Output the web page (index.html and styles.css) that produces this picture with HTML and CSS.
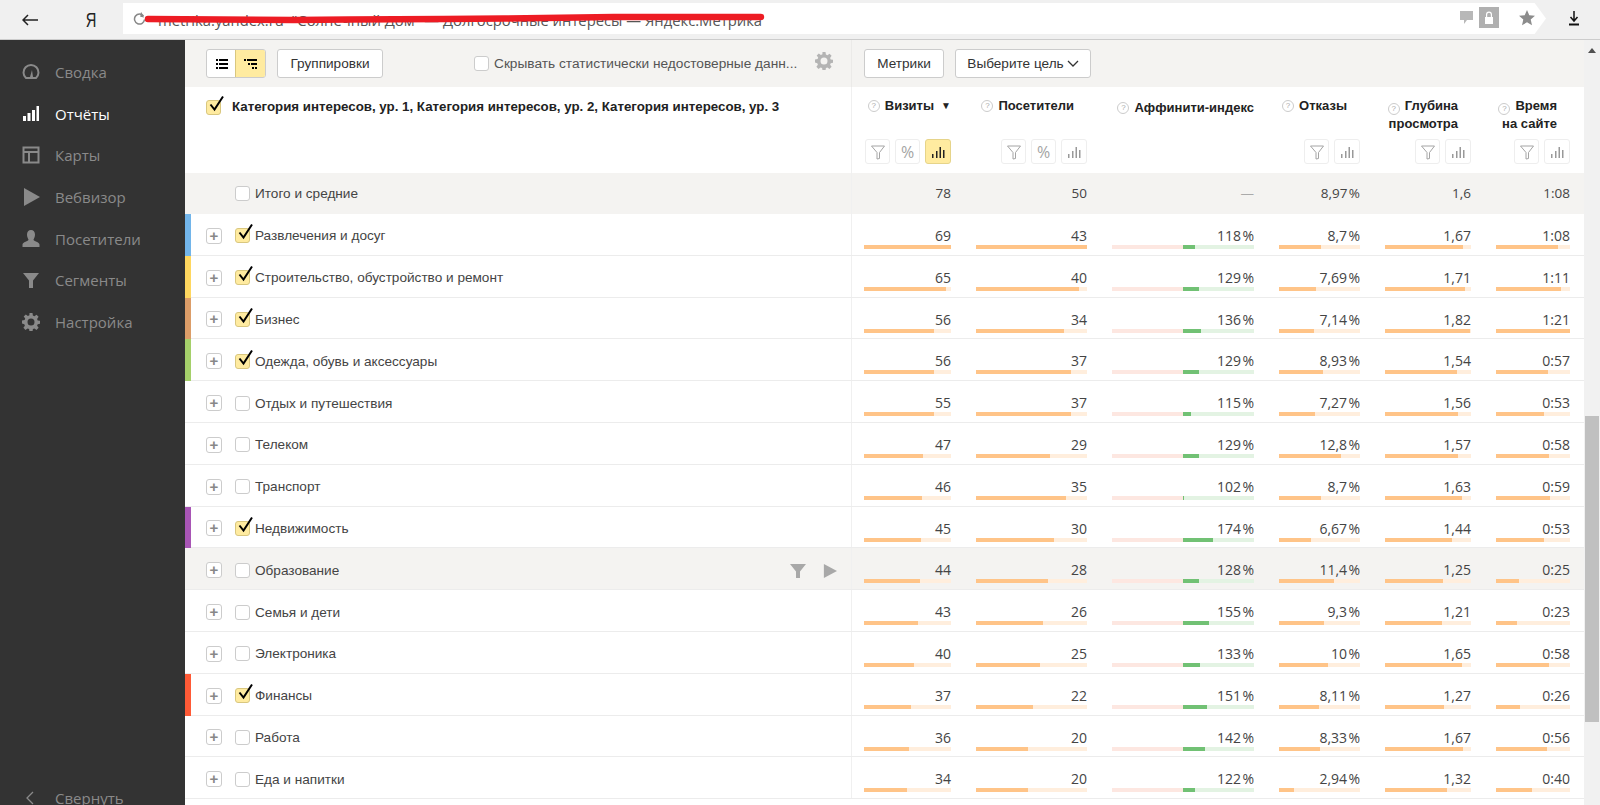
FILE: index.html
```html
<!DOCTYPE html>
<html lang="ru">
<head>
    <meta charset="UTF-8">
    <title>Долгосрочные интересы — Яндекс.Метрика</title>
    <link rel="stylesheet" href="styles.css">
</head>
<body>
    <svg class="sprite" width="0" height="0">
        <symbol id="i-funnel" viewBox="0 0 16 16"><path d="M0 1h16L10 8.500V15H6V8.500z"/></symbol>
        <symbol id="i-funnel-line" viewBox="0 0 16 16"><path d="M1.500 2h13L9.500 8.500V14.500L7 15V8.500z" fill="none" stroke="currentColor"/></symbol>
        <symbol id="i-bars" viewBox="0 0 16 12"><path d="M2 8h1.500v4H2zM6 5h1.500v7H6zM9.500 1H11v11H9.500zM13 4h1.500v8H13z"/></symbol>
        <symbol id="i-play" viewBox="0 0 16 16"><path d="M1 0l15 8-15 8z"/></symbol>
        <symbol id="i-check" viewBox="0 0 18 18"><path d="M3.500 9.500L7.500 14.500 16 1.500" fill="none" stroke="#000" stroke-width="2"/></symbol>
        <symbol id="i-gear" viewBox="0 0 18 18"><path fill-rule="evenodd" d="M7.500 0h3l.4 2.600 1.500.6 2.100-1.500 2.100 2.100-1.500 2.100.6 1.500 2.600.4v3l-2.600.4-.6 1.500 1.500 2.100-2.100 2.100-2.100-1.500-1.500.6-.4 2.600h-3l-.4-2.600-1.500-.6-2.100 1.500-2.100-2.100 1.500-2.100-.6-1.500L0 10.500v-3l2.600-.4.6-1.500-1.500-2.100 2.100-2.100 2.100 1.500 1.500-.6zM9 5.500a3.500 3.500 0 1 0 0 7 3.500 3.500 0 0 0 0-7z"/></symbol>
    </svg>

    <!-- панель браузера -->
    <header class="browser-bar">
        <svg class="back-icon" width="16" height="12" viewBox="0 0 16 12"><path d="M6 1L1 6l5 5M1 6h15" fill="none" stroke="#222" stroke-width="1.500"/></svg>
        <span class="ya-logo">Я</span>
        <div class="address">
            <svg class="reload-icon" width="13" height="13" viewBox="0 0 13 13"><path d="M10.500 4A5 5 0 1 0 11.500 7.500" fill="none" stroke="#888" stroke-width="1.500"/><path d="M7.500 0v5h4z" fill="#888" transform="rotate(10 9 3)"/></svg>
            <span class="address-text">metrika.yandex.ru &nbsp;"Солнечный Дом" — Долгосрочные интересы — Яндекс.Метрика</span>
            <svg class="scribble" width="625" height="14" viewBox="0 0 625 14"><path d="M4 8L150 9 205 8.500 300 8 360 7.500 470 6 617 6" fill="none" stroke="#ed1c24" stroke-width="6.500" stroke-linecap="round"/></svg>
            <div class="address-tools">
                <svg class="comment-icon" width="15" height="15" viewBox="0 0 15 15"><path d="M1 1h13v9H8l-3 4v-4H1z" fill="#b8b8b8"/></svg>
                <span class="lock-tile"><svg width="10" height="14" viewBox="0 0 10 14"><path fill-rule="evenodd" d="M2 6V3.500a3 3 0 0 1 6 0V6h1v7H1V6zM3.200 6h3.600V3.500a1.800 1.800 0 0 0-3.600 0z" fill="#fff"/></svg></span>
                <svg width="16" height="16" viewBox="0 0 16 16"><path d="M8 0l2.300 5.300 5.700.5-4.300 3.800 1.300 5.600L8 12.300l-5 2.900 1.300-5.600L0 5.800l5.700-.5z" fill="#8c8c8c"/></svg>
            </div>
        </div>
        <svg class="download-icon" width="10" height="16" viewBox="0 0 10 16"><path d="M5 0v9M1.500 6L5 10l3.500-4" fill="none" stroke="#111" stroke-width="1.500"/><path d="M0 13.500h10" stroke="#111" stroke-width="2"/></svg>
    </header>

    <div class="app">
        <!-- боковое меню -->
        <nav class="sidebar">
            <a class="nav-item"><svg class="nav-icon" viewBox="0 0 18 18"><path d="M4 15a7.500 7.500 0 1 1 10 0z" fill="none" stroke="currentColor" stroke-width="2"/><path d="M8 14l2-7 1 7z" fill="currentColor"/></svg>Сводка</a>
            <a class="nav-item active"><svg class="nav-icon" viewBox="0 0 18 18"><path d="M1 11h3v5H1zM5.500 8h3v8h-3zM10 5h3v11h-3zM14.500 1H17v15h-2.500z" fill="currentColor"/></svg>Отчёты</a>
            <a class="nav-item"><svg class="nav-icon" viewBox="0 0 18 18"><path d="M1.500 1.500h15v15h-15zM1.500 6h15M7 6v10.500" fill="none" stroke="currentColor" stroke-width="2"/></svg>Карты</a>
            <a class="nav-item"><svg class="nav-icon" viewBox="0 0 18 18"><path d="M2 0l16 9-16 9z" fill="currentColor"/></svg>Вебвизор</a>
            <a class="nav-item"><svg class="nav-icon" viewBox="0 0 18 18"><path d="M9 0c2.500 0 4 2 4 4.500S12 8.500 11.500 9.500c0 2 6 2.500 6 5V17H.5v-2.500c0-2.500 6-3 6-5C6 8.500 5 7 5 4.500S6.500 0 9 0z" fill="currentColor"/></svg>Посетители</a>
            <a class="nav-item"><svg class="nav-icon" viewBox="0 0 18 18"><path d="M1 2h16l-6 7.500V17H7V9.500z" fill="currentColor"/></svg>Сегменты</a>
            <a class="nav-item"><svg class="nav-icon" viewBox="0 0 18 18"><use href="#i-gear" fill="currentColor"/></svg>Настройка</a>
            <a class="nav-item collapse"><svg class="nav-icon" viewBox="0 0 18 18"><path d="M11 3L5 9l6 6" fill="none" stroke="currentColor" stroke-width="1.300"/></svg>Свернуть</a>
        </nav>

        <main class="report">
            <!-- панель инструментов -->
            <div class="toolbar">
                <div class="toolbar-left">
                    <div class="switch">
                        <span class="switch-item"><svg width="12" height="10" viewBox="0 0 12 10"><path d="M0 0h2v2H0zM3 0h9v2H3zM0 4h2v2H0zM3 4h9v2H3zM0 8h2v2H0zM3 8h9v2H3z"/></svg></span>
                        <span class="switch-item on"><svg width="13" height="10" viewBox="0 0 13 10"><path d="M0 0h2v2H0zM3 0h10v2H3zM4 4h2v2H4zM7 4h6v2H7zM8 8h2v2H8zM11 8h2v2h-2z"/></svg></span>
                    </div>
                    <button class="btn btn-group">Группировки</button>
                    <label class="stat-check"><span class="box"></span>Скрывать статистически недостоверные данн...</label>
                    <svg class="gear" width="18" height="18"><use href="#i-gear"/></svg>
                </div>
                <div class="toolbar-right">
                    <button class="btn btn-metrics">Метрики</button>
                    <button class="btn btn-goal">Выберите цель <svg width="12" height="7" viewBox="0 0 12 7"><path d="M1 1l5 5 5-5" fill="none" stroke="#333" stroke-width="1.300"/></svg></button>
                </div>
            </div>

            <!-- шапка таблицы -->
            <div class="grid head">
                <div class="head-title"><span class="box checked"><svg class="tick"><use href="#i-check"/></svg></span>Категория интересов, ур. 1, Категория интересов, ур. 2, Категория интересов, ур. 3</div>
                <div class="head-cell col-1">
                    <div class="head-label sorted"><i class="hint">?</i>Визиты<span class="sort-arrow">▼</span></div>
                    <div class="tools">
                        <span class="tool"><svg width="16" height="16"><use href="#i-funnel-line"/></svg></span><span class="tool">%</span><span class="tool wide on"><svg width="16" height="12"><use href="#i-bars"/></svg></span>
                    </div>
                </div>
                <div class="head-cell">
                    <div class="head-label"><i class="hint">?</i>Посетители</div>
                    <div class="tools">
                        <span class="tool"><svg width="16" height="16"><use href="#i-funnel-line"/></svg></span><span class="tool">%</span><span class="tool wide"><svg width="16" height="12"><use href="#i-bars"/></svg></span>
                    </div>
                </div>
                <div class="head-cell">
                    <div class="head-label flush"><i class="hint">?</i>Аффинити-индекс</div>
                </div>
                <div class="head-cell">
                    <div class="head-label"><i class="hint">?</i>Отказы</div>
                    <div class="tools">
                        <span class="tool"><svg width="16" height="16"><use href="#i-funnel-line"/></svg></span><span class="tool wide"><svg width="16" height="12"><use href="#i-bars"/></svg></span>
                    </div>
                </div>
                <div class="head-cell">
                    <div class="head-label"><span><i class="hint">?</i>Глубина<br>просмотра</span></div>
                    <div class="tools">
                        <span class="tool"><svg width="16" height="16"><use href="#i-funnel-line"/></svg></span><span class="tool wide"><svg width="16" height="12"><use href="#i-bars"/></svg></span>
                    </div>
                </div>
                <div class="head-cell">
                    <div class="head-label"><span><i class="hint">?</i>Время<br>на сайте</span></div>
                    <div class="tools">
                        <span class="tool"><svg width="16" height="16"><use href="#i-funnel-line"/></svg></span><span class="tool wide"><svg width="16" height="12"><use href="#i-bars"/></svg></span>
                    </div>
                </div>
            </div>

            <!-- итого -->
            <div class="grid total">
                <div class="name"><span class="expand blank"></span><span class="box"></span>Итого и средние</div>
                <div class="val col-1">78</div>
                <div class="val">50</div>
                <div class="val muted">—</div>
                <div class="val">8,97&#8202;%</div>
                <div class="val">1,6</div>
                <div class="val">1:08</div>
            </div>

            <!-- строки -->
            <div class="grid row">
                <div class="name stripe blue"><span class="expand">+</span><span class="box checked"><svg class="tick"><use href="#i-check"/></svg></span>Развлечения и досуг</div>
                <div class="val col-1">69<div class="bar"><div class="fill" style="width:100%"></div></div></div>
                <div class="val">43<div class="bar"><div class="fill" style="width:100%"></div></div></div>
                <div class="val">118&#8202;%<div class="bar aff"><div class="fill" style="width:8.2%"></div></div></div>
                <div class="val">8,7&#8202;%<div class="bar"><div class="fill" style="width:52%"></div></div></div>
                <div class="val">1,67<div class="bar"><div class="fill" style="width:91%"></div></div></div>
                <div class="val">1:08<div class="bar"><div class="fill" style="width:84%"></div></div></div>
            </div>
            <div class="grid row">
                <div class="name stripe yellow"><span class="expand">+</span><span class="box checked"><svg class="tick"><use href="#i-check"/></svg></span>Строительство, обустройство и ремонт</div>
                <div class="val col-1">65<div class="bar"><div class="fill" style="width:94.2%"></div></div></div>
                <div class="val">40<div class="bar"><div class="fill" style="width:93%"></div></div></div>
                <div class="val">129&#8202;%<div class="bar aff"><div class="fill" style="width:11.3%"></div></div></div>
                <div class="val">7,69&#8202;%<div class="bar"><div class="fill" style="width:46%"></div></div></div>
                <div class="val">1,71<div class="bar"><div class="fill" style="width:93%"></div></div></div>
                <div class="val">1:11<div class="bar"><div class="fill" style="width:88%"></div></div></div>
            </div>
            <div class="grid row">
                <div class="name stripe orange"><span class="expand">+</span><span class="box checked"><svg class="tick"><use href="#i-check"/></svg></span>Бизнес</div>
                <div class="val col-1">56<div class="bar"><div class="fill" style="width:81%"></div></div></div>
                <div class="val">34<div class="bar"><div class="fill" style="width:79%"></div></div></div>
                <div class="val">136&#8202;%<div class="bar aff"><div class="fill" style="width:12.9%"></div></div></div>
                <div class="val">7,14&#8202;%<div class="bar"><div class="fill" style="width:43%"></div></div></div>
                <div class="val">1,82<div class="bar"><div class="fill" style="width:99%"></div></div></div>
                <div class="val">1:21<div class="bar"><div class="fill" style="width:100%"></div></div></div>
            </div>
            <div class="grid row">
                <div class="name stripe green"><span class="expand">+</span><span class="box checked"><svg class="tick"><use href="#i-check"/></svg></span>Одежда, обувь и аксессуары</div>
                <div class="val col-1">56<div class="bar"><div class="fill" style="width:81%"></div></div></div>
                <div class="val">37<div class="bar"><div class="fill" style="width:86%"></div></div></div>
                <div class="val">129&#8202;%<div class="bar aff"><div class="fill" style="width:11.3%"></div></div></div>
                <div class="val">8,93&#8202;%<div class="bar"><div class="fill" style="width:54%"></div></div></div>
                <div class="val">1,54<div class="bar"><div class="fill" style="width:84%"></div></div></div>
                <div class="val">0:57<div class="bar"><div class="fill" style="width:70%"></div></div></div>
            </div>
            <div class="grid row">
                <div class="name"><span class="expand">+</span><span class="box"></span>Отдых и путешествия</div>
                <div class="val col-1">55<div class="bar"><div class="fill" style="width:80%"></div></div></div>
                <div class="val">37<div class="bar"><div class="fill" style="width:86%"></div></div></div>
                <div class="val">115&#8202;%<div class="bar aff"><div class="fill" style="width:5.9%"></div></div></div>
                <div class="val">7,27&#8202;%<div class="bar"><div class="fill" style="width:44%"></div></div></div>
                <div class="val">1,56<div class="bar"><div class="fill" style="width:85%"></div></div></div>
                <div class="val">0:53<div class="bar"><div class="fill" style="width:65%"></div></div></div>
            </div>
            <div class="grid row">
                <div class="name"><span class="expand">+</span><span class="box"></span>Телеком</div>
                <div class="val col-1">47<div class="bar"><div class="fill" style="width:68%"></div></div></div>
                <div class="val">29<div class="bar"><div class="fill" style="width:67%"></div></div></div>
                <div class="val">129&#8202;%<div class="bar aff"><div class="fill" style="width:11.3%"></div></div></div>
                <div class="val">12,8&#8202;%<div class="bar"><div class="fill" style="width:77%"></div></div></div>
                <div class="val">1,57<div class="bar"><div class="fill" style="width:85%"></div></div></div>
                <div class="val">0:58<div class="bar"><div class="fill" style="width:72%"></div></div></div>
            </div>
            <div class="grid row">
                <div class="name"><span class="expand">+</span><span class="box"></span>Транспорт</div>
                <div class="val col-1">46<div class="bar"><div class="fill" style="width:67%"></div></div></div>
                <div class="val">35<div class="bar"><div class="fill" style="width:81%"></div></div></div>
                <div class="val">102&#8202;%<div class="bar aff"><div class="fill" style="width:1%"></div></div></div>
                <div class="val">8,7&#8202;%<div class="bar"><div class="fill" style="width:52%"></div></div></div>
                <div class="val">1,63<div class="bar"><div class="fill" style="width:89%"></div></div></div>
                <div class="val">0:59<div class="bar"><div class="fill" style="width:73%"></div></div></div>
            </div>
            <div class="grid row">
                <div class="name stripe purple"><span class="expand">+</span><span class="box checked"><svg class="tick"><use href="#i-check"/></svg></span>Недвижимость</div>
                <div class="val col-1">45<div class="bar"><div class="fill" style="width:65%"></div></div></div>
                <div class="val">30<div class="bar"><div class="fill" style="width:70%"></div></div></div>
                <div class="val">174&#8202;%<div class="bar aff"><div class="fill" style="width:21.2%"></div></div></div>
                <div class="val">6,67&#8202;%<div class="bar"><div class="fill" style="width:40%"></div></div></div>
                <div class="val">1,44<div class="bar"><div class="fill" style="width:78%"></div></div></div>
                <div class="val">0:53<div class="bar"><div class="fill" style="width:65%"></div></div></div>
            </div>
            <div class="grid row hovered">
                <div class="name"><span class="expand">+</span><span class="box"></span>Образование
                    <span class="row-actions">
                        <svg width="16" height="16"><use href="#i-funnel"/></svg>
                        <svg width="14" height="16"><use href="#i-play"/></svg>
                    </span>
                </div>
                <div class="val col-1">44<div class="bar"><div class="fill" style="width:64%"></div></div></div>
                <div class="val">28<div class="bar"><div class="fill" style="width:65%"></div></div></div>
                <div class="val">128&#8202;%<div class="bar aff"><div class="fill" style="width:11.3%"></div></div></div>
                <div class="val">11,4&#8202;%<div class="bar"><div class="fill" style="width:68%"></div></div></div>
                <div class="val">1,25<div class="bar"><div class="fill" style="width:68%"></div></div></div>
                <div class="val">0:25<div class="bar"><div class="fill" style="width:31%"></div></div></div>
            </div>
            <div class="grid row">
                <div class="name"><span class="expand">+</span><span class="box"></span>Семья и дети</div>
                <div class="val col-1">43<div class="bar"><div class="fill" style="width:62%"></div></div></div>
                <div class="val">26<div class="bar"><div class="fill" style="width:60%"></div></div></div>
                <div class="val">155&#8202;%<div class="bar aff"><div class="fill" style="width:18.4%"></div></div></div>
                <div class="val">9,3&#8202;%<div class="bar"><div class="fill" style="width:56%"></div></div></div>
                <div class="val">1,21<div class="bar"><div class="fill" style="width:66%"></div></div></div>
                <div class="val">0:23<div class="bar"><div class="fill" style="width:28%"></div></div></div>
            </div>
            <div class="grid row">
                <div class="name"><span class="expand">+</span><span class="box"></span>Электроника</div>
                <div class="val col-1">40<div class="bar"><div class="fill" style="width:58%"></div></div></div>
                <div class="val">25<div class="bar"><div class="fill" style="width:58%"></div></div></div>
                <div class="val">133&#8202;%<div class="bar aff"><div class="fill" style="width:11.8%"></div></div></div>
                <div class="val">10&#8202;%<div class="bar"><div class="fill" style="width:60%"></div></div></div>
                <div class="val">1,65<div class="bar"><div class="fill" style="width:90%"></div></div></div>
                <div class="val">0:58<div class="bar"><div class="fill" style="width:72%"></div></div></div>
            </div>
            <div class="grid row">
                <div class="name stripe red"><span class="expand">+</span><span class="box checked"><svg class="tick"><use href="#i-check"/></svg></span>Финансы</div>
                <div class="val col-1">37<div class="bar"><div class="fill" style="width:54%"></div></div></div>
                <div class="val">22<div class="bar"><div class="fill" style="width:51%"></div></div></div>
                <div class="val">151&#8202;%<div class="bar aff"><div class="fill" style="width:17.2%"></div></div></div>
                <div class="val">8,11&#8202;%<div class="bar"><div class="fill" style="width:49%"></div></div></div>
                <div class="val">1,27<div class="bar"><div class="fill" style="width:69%"></div></div></div>
                <div class="val">0:26<div class="bar"><div class="fill" style="width:32%"></div></div></div>
            </div>
            <div class="grid row">
                <div class="name"><span class="expand">+</span><span class="box"></span>Работа</div>
                <div class="val col-1">36<div class="bar"><div class="fill" style="width:52%"></div></div></div>
                <div class="val">20<div class="bar"><div class="fill" style="width:47%"></div></div></div>
                <div class="val">142&#8202;%<div class="bar aff"><div class="fill" style="width:15.3%"></div></div></div>
                <div class="val">8,33&#8202;%<div class="bar"><div class="fill" style="width:50%"></div></div></div>
                <div class="val">1,67<div class="bar"><div class="fill" style="width:91%"></div></div></div>
                <div class="val">0:56<div class="bar"><div class="fill" style="width:69%"></div></div></div>
            </div>
            <div class="grid row">
                <div class="name"><span class="expand">+</span><span class="box"></span>Еда и напитки</div>
                <div class="val col-1">34<div class="bar"><div class="fill" style="width:49%"></div></div></div>
                <div class="val">20<div class="bar"><div class="fill" style="width:47%"></div></div></div>
                <div class="val">122&#8202;%<div class="bar aff"><div class="fill" style="width:8.7%"></div></div></div>
                <div class="val">2,94&#8202;%<div class="bar"><div class="fill" style="width:18%"></div></div></div>
                <div class="val">1,32<div class="bar"><div class="fill" style="width:72%"></div></div></div>
                <div class="val">0:40<div class="bar"><div class="fill" style="width:49%"></div></div></div>
            </div>
        </main>

        <div class="scrollbar">
            <span class="scroll-arrow"></span>
            <div class="scroll-thumb"></div>
        </div>
    </div>
</body>
</html>
```

FILE: styles.css
```css
html, body {
    margin: 0;
    height: 100%;
    overflow: hidden;
}
body {
    width: 1600px;
    height: 805px;
    font-family: "Liberation Sans", Arial, sans-serif;
    font-size: 13px;
    color: #333;
    background: #fff;
}
.sprite {
    display: block;
    height: 0;
}

/* панель браузера */
.browser-bar {
    height: 39px;
    box-sizing: border-box;
    display: flex;
    align-items: center;
    background: #f0f0f0;
    padding-left: 22px;
}
.back-icon {
    flex: none;
}
.ya-logo {
    width: 16px;
    margin-left: 45px;
    margin-right: 24px;
    font-family: "Liberation Sans", sans-serif;
    font-size: 21px;
    color: #222;
    text-align: center;
    transform: scaleX(0.7);
}
.address {
    position: relative;
    width: 1423px;
    height: 31px;
    margin-top: -2px;
    display: flex;
    align-items: center;
    background: #fff;
    clip-path: polygon(0 0, 99.2% 0, 100% 50%, 99.2% 100%, 0 100%);
}
.reload-icon {
    margin-left: 10px;
    flex: none;
}
.address-text {
    margin-left: 12px;
    margin-top: 3px;
    font-family: "Open Sans", sans-serif;
    font-size: 14.800px;
    color: #555;
    white-space: nowrap;
}
.scribble {
    position: absolute;
    left: 21px;
    top: 8px;
}
.address-tools {
    position: absolute;
    right: 11px;
    top: 4px;
    display: flex;
    align-items: center;
    gap: 9px;
    height: 21px;
}
.address-tools svg {
    display: block;
}
.comment-icon {
    margin-right: -4px;
}
.lock-tile {
    width: 20px;
    height: 21px;
    background: #b0b0b0;
    display: flex;
    align-items: center;
    justify-content: center;
    margin-right: 11px;
}
.download-icon {
    margin-left: 23px;
    margin-top: -2px;
    flex: none;
}

.app {
    display: flex;
    height: 766px;
    border-top: 1px solid #ccc;
    box-sizing: border-box;
}

/* боковое меню */
.sidebar {
    width: 185px;
    flex: none;
    background: #333;
    overflow: hidden;
    padding-top: 11px;
    box-sizing: border-box;
    font-family: "Open Sans", sans-serif;
    font-size: 15px;
    color: #8a8a8a;
}
.nav-item {
    display: flex;
    align-items: center;
    height: 41.700px;
    padding-left: 22px;
}
.nav-item.active {
    color: #fff;
}
.nav-icon {
    width: 18px;
    height: 18px;
    margin-right: 15px;
    flex: none;
}
.collapse {
    margin-top: 434px;
}

/* отчёт */
.report {
    flex: 1;
    min-width: 0;
}
.toolbar {
    display: grid;
    grid-template-columns: 666px 1fr;
    height: 47px;
    background: #f4f3f1;
}
.toolbar-left {
    display: flex;
    align-items: center;
    padding-left: 21px;
}
.toolbar-right {
    display: flex;
    align-items: center;
    gap: 11px;
    padding-left: 12px;
    border-left: 1px solid #ebeae8;
}
.switch {
    display: flex;
    width: 60px;
    height: 29px;
    box-sizing: border-box;
    border: 1px solid #ccc;
    border-radius: 3px;
    overflow: hidden;
    background: #fff;
}
.switch-item {
    flex: 1;
    display: flex;
    align-items: center;
    justify-content: center;
}
.switch-item.on {
    background: #ffeba0;
    box-shadow: -1px 0 0 #d9c77f;
}
.btn {
    height: 29px;
    padding: 0;
    font: 13.600px "Liberation Sans", sans-serif;
    color: #333;
    background: #fff;
    border: 1px solid #ccc;
    border-radius: 3px;
}
.btn-group {
    width: 106px;
    margin-left: 11px;
}
.btn-metrics {
    width: 80px;
}
.btn-goal {
    width: 136px;
    display: flex;
    align-items: center;
    justify-content: center;
    gap: 3px;
}
.stat-check {
    display: flex;
    align-items: center;
    margin-left: 91px;
    font-size: 13.700px;
    color: #555;
    white-space: nowrap;
}
.stat-check .box {
    margin-right: 5px;
}
.gear {
    margin-left: 18px;
    margin-top: -6px;
    fill: #b4b4b4;
}

.box {
    position: relative;
    display: inline-block;
    flex: none;
    width: 15px;
    height: 15px;
    box-sizing: border-box;
    background: #fff;
    border: 1px solid #ccc;
    border-radius: 3px;
}
.box.checked {
    background: #ffeba0;
    border-color: #d9c77f;
}
.tick {
    position: absolute;
    left: 0;
    top: -6px;
    width: 18px;
    height: 18px;
}

/* таблица */
.grid {
    display: grid;
    grid-template-columns: 666px 100px 136px 167px 106px 111px 99px;
    padding-right: 14px;
}
.head {
    height: 86px;
}
.head-title {
    display: flex;
    align-items: flex-start;
    padding: 12px 0 0 21px;
    font-weight: bold;
    font-size: 13.300px;
    color: #222;
}
.head-title .box {
    margin-right: 11px;
    margin-top: 1px;
}
.head-cell {
    position: relative;
    padding-top: 10px;
    padding-left: 13px;
    font-weight: bold;
    font-size: 13px;
    color: #222;
}
.head-cell + .head-cell {
    padding-left: 25px;
}
.head-cell:first-of-type, .col-1 {
    border-left: 1px solid #f0f0f0;
}
.head-label {
    display: flex;
    justify-content: flex-end;
    padding-right: 13px;
    line-height: 17px;
    text-align: right;
}
.head-label.flush {
    padding-right: 0;
    margin-top: 2px;
}
.head-label.sorted {
    padding-right: 0;
}
.sort-arrow {
    font-size: 10px;
    margin-left: 7px;
}
.hint {
    display: inline-block;
    width: 12px;
    height: 12px;
    box-sizing: border-box;
    margin-right: 5px;
    margin-top: 3px;
    border: 1px solid #ccc;
    border-radius: 50%;
    font: normal 8px/10px "Liberation Sans", sans-serif;
    color: #aaa;
    text-align: center;
    vertical-align: -1px;
}
.tools {
    position: absolute;
    right: 0;
    top: 52px;
    display: flex;
    gap: 5px;
}
.tool {
    width: 25px;
    height: 25px;
    box-sizing: border-box;
    display: flex;
    align-items: center;
    justify-content: center;
    border: 1px solid #eee;
    border-radius: 3px;
    font-family: "Open Sans", sans-serif;
    font-weight: normal;
    font-size: 16px;
    color: #a4a4a4;
    fill: #999;
    background: #fff;
}
.tool svg {
    display: block;
}
.tool.wide {
    width: 26px;
}
.tool.on {
    background: #ffeba0;
    border-color: #e6d48a;
    fill: #222;
}

.total, .row {
    height: 41.800px;
    box-sizing: border-box;
    border-bottom: 1px solid #ececec;
}
.total, .hovered {
    background: #f4f3f1;
}
.total {
    height: 41px;
    border-bottom: none;
}
.name {
    position: relative;
    display: flex;
    align-items: center;
    padding-left: 21px;
    padding-top: 3px;
    color: #444;
    font-size: 13.600px;
    white-space: nowrap;
}
.total .name {
    padding-top: 0;
}
.name .box {
    margin-right: 5px;
    margin-left: 13px;
}
.stripe::before {
    content: "";
    position: absolute;
    left: 0;
    top: 0;
    bottom: -1px;
    width: 6px;
}
.blue::before { background: #72b5ea; }
.yellow::before { background: #ffd75f; }
.orange::before { background: #dc9d68; }
.green::before { background: #a5d06a; }
.purple::before { background: #a855b5; }
.red::before { background: #ff5a36; }
.expand {
    width: 16px;
    height: 16px;
    box-sizing: border-box;
    flex: none;
    border: 1px solid #ccc;
    border-radius: 3px;
    background: #fff;
    color: #888;
    font-size: 15px;
    line-height: 13px;
    font-weight: bold;
    text-align: center;
}
.expand.blank {
    visibility: hidden;
}
.row-actions {
    position: absolute;
    left: 605px;
    top: 15px;
    display: flex;
    gap: 17px;
    fill: #a8a8a8;
}
.val {
    padding-left: 25px;
    padding-top: 12px;
    font-family: "Open Sans", sans-serif;
    font-size: 14px;
    line-height: 19px;
    color: #444;
    text-align: right;
}
.val.col-1 {
    padding-left: 12px;
}
.total .val {
    padding-top: 11px;
    font-size: 13.500px;
}
.muted {
    color: #aaa;
}
.bar {
    height: 4px;
    background: #ffeedd;
}
.fill {
    height: 100%;
    background: #ffc488;
}
.aff {
    position: relative;
    background: linear-gradient(to right, #fde7e1 50%, #e3f3e3 50%);
}
.aff .fill {
    margin-left: 50%;
    background: #71c174;
}

.scrollbar {
    position: relative;
    width: 16px;
    flex: none;
    background: #f1f1f1;
}
.scroll-arrow {
    position: absolute;
    left: 4px;
    top: 8px;
    border: 4px solid transparent;
    border-top: none;
    border-bottom: 5px solid #505050;
}
.scroll-thumb {
    position: absolute;
    left: 1px;
    right: 1px;
    top: 376px;
    height: 306px;
    background: #c0c0c0;
}
```
